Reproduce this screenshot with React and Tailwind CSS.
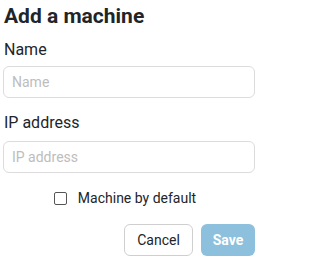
export default function App() {
  return (
    <div className="w-[258px] h-[259px] bg-white px-[3px] text-[#212529]" style={{ fontFamily: "Roboto, 'Liberation Sans', sans-serif" }}>
      <h2 className="mt-[2px] pl-px text-[21px] leading-[28px] font-bold">Add a machine</h2>

      <label className="mt-[8px] block pl-px text-[16px] leading-[24px]">Name</label>
      <input
        className="mt-1 block h-8 w-full rounded-md border border-[#dcdcdc] px-2 text-[14px] placeholder:text-[#bdbdbd] outline-none"
        placeholder="Name"
      />

      <label className="mt-[13px] block pl-px text-[16px] leading-[24px]">IP address</label>
      <input
        className="mt-[6px] block h-8 w-full rounded-md border border-[#dcdcdc] px-2 text-[14px] placeholder:text-[#bdbdbd] outline-none"
        placeholder="IP address"
      />

      <div className="mt-[15px] flex items-center justify-center gap-[11px] pr-2 text-[14px] leading-5">
        <span className="h-[13px] w-[13px] rounded-[2px] border border-[#555]" />
        <span>Machine by default</span>
      </div>

      <div className="mt-4 flex justify-end gap-2">
        <button className="h-8 w-[69px] rounded-md border border-[#cfcfcf] bg-white text-[14px]">Cancel</button>
        <button className="h-8 w-[54px] rounded-md bg-[#8cc0dc] text-[14px] font-bold text-white">Save</button>
      </div>
    </div>
  );
}
